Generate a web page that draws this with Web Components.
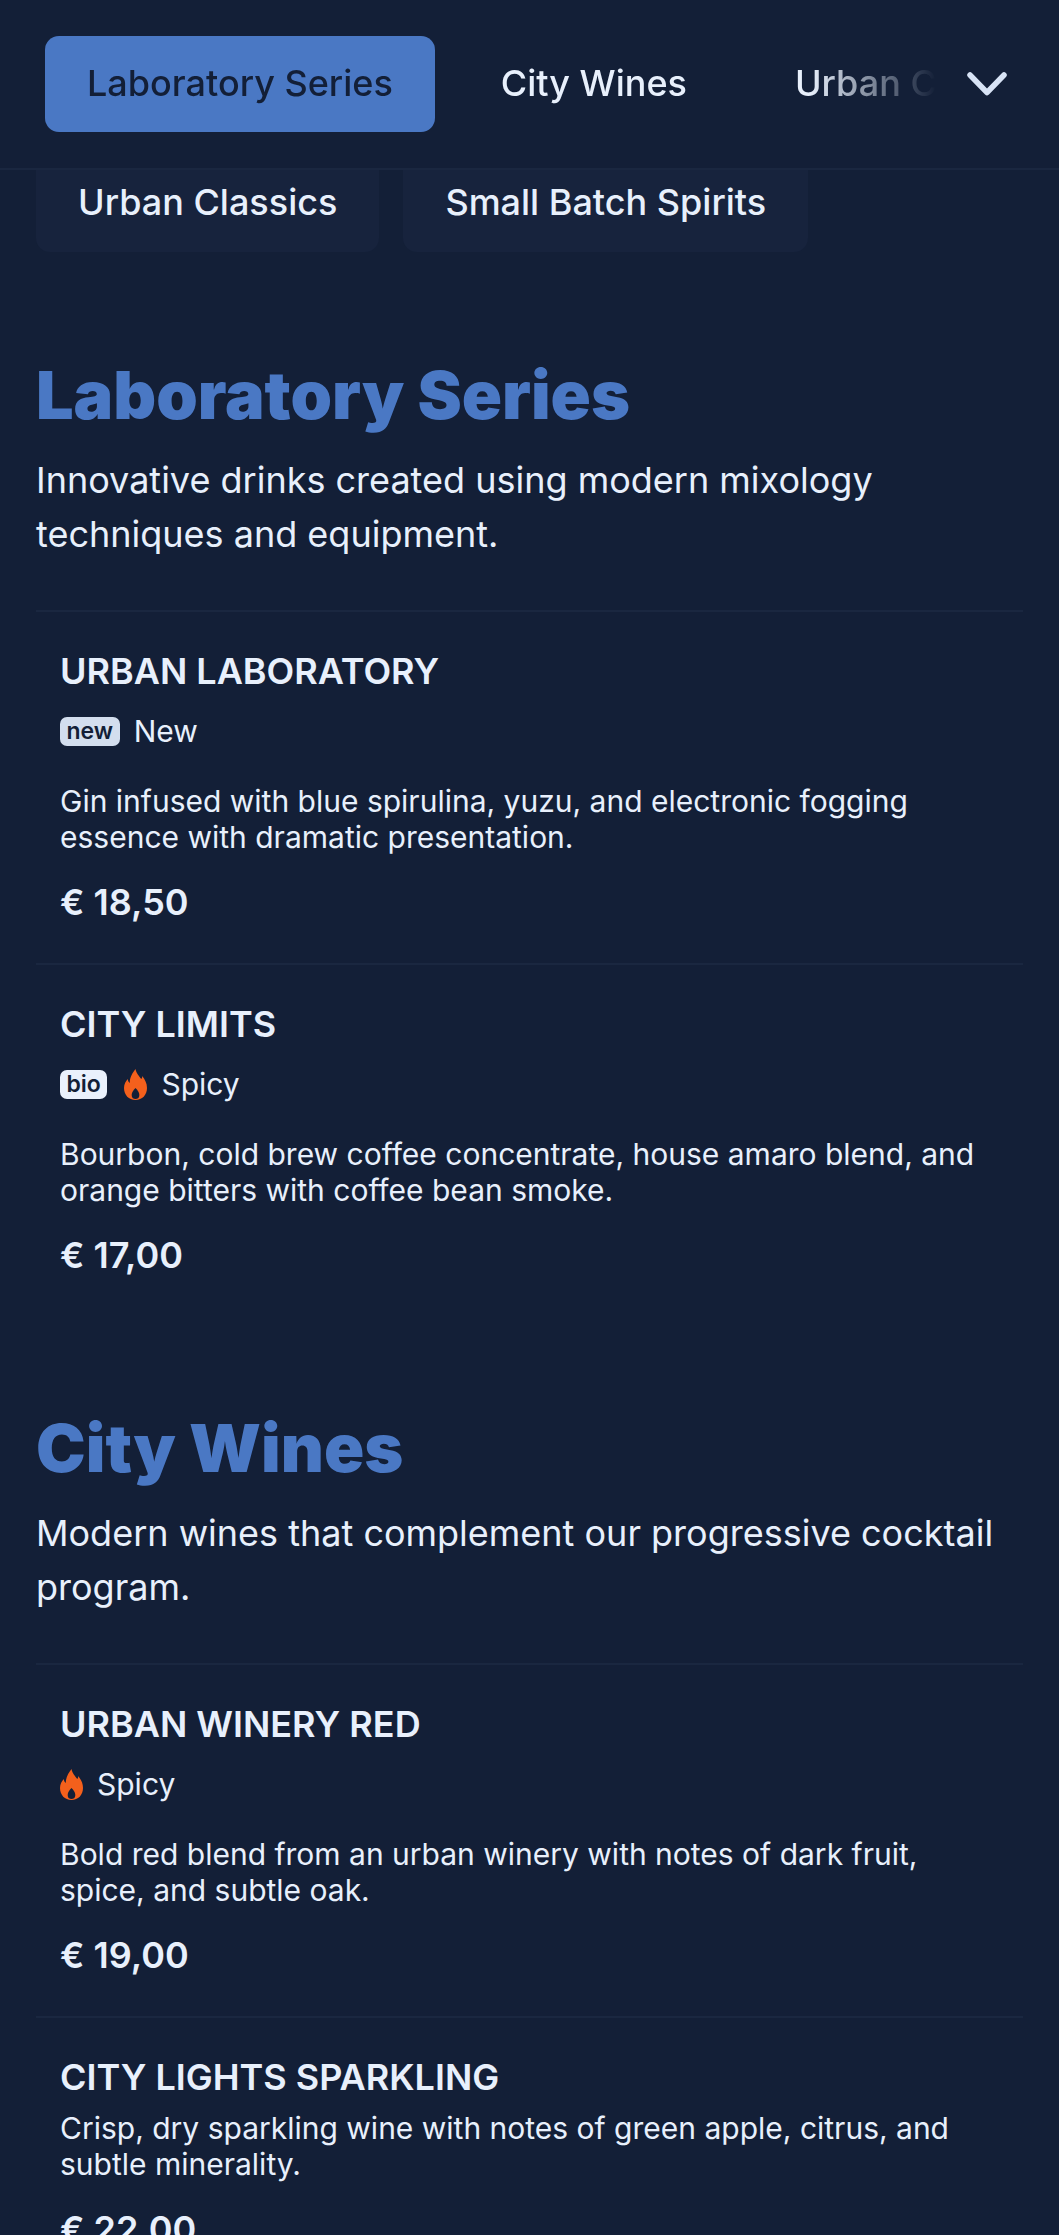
<!DOCTYPE html>
<html>
<head>
<meta charset="utf-8">
<style>
  html, body { margin: 0; height: 2235px; overflow: hidden; background: #131f37; }
  body { font-family: "Inter", "Liberation Sans", sans-serif; color: #e8f0fc; }
</style>
</head>
<body>
<menu-nav active="Laboratory Series"></menu-nav>
<chip-row></chip-row>
<menu-section title="Laboratory Series" intro="Innovative drinks created using modern mixology techniques and equipment.">
  <menu-item name="URBAN LABORATORY" price="€ 18,50" badge="new" label="New">Gin infused with blue spirulina, yuzu, and electronic fogging essence with dramatic presentation.</menu-item>
  <menu-item name="CITY LIMITS" price="€ 17,00" badge="bio" spicy label="Spicy">Bourbon, cold brew coffee concentrate, house amaro blend, and orange bitters with coffee bean smoke.</menu-item>
</menu-section>
<menu-section title="City Wines" intro="Modern wines that complement our progressive cocktail program.">
  <menu-item name="URBAN WINERY RED" price="€ 19,00" spicy label="Spicy">Bold red blend from an urban winery with notes of dark fruit, spice, and subtle oak.</menu-item>
  <menu-item name="CITY LIGHTS SPARKLING" price="€ 22,00">Crisp, dry sparkling wine with notes of green apple, citrus, and subtle minerality.</menu-item>
</menu-section>
<script>
class MenuNav extends HTMLElement {
  constructor() {
    super();
    this.attachShadow({ mode: 'open' });
  }
  connectedCallback() {
    this.shadowRoot.innerHTML = `
      <style>
        :host { display: block; height: 168px; border-bottom: 2px solid #1a2740; position: relative; }
        .tabs { display: flex; gap: 24px; padding: 36px 0 0 45px; overflow: hidden; white-space: nowrap; width: 940px; box-sizing: border-box;
          -webkit-mask-image: linear-gradient(to right, #000 810px, transparent 936px); mask-image: linear-gradient(to right, #000 810px, transparent 936px); }
        .tab { height: 96px; line-height: 94px; padding: 0 42px; border-radius: 14px; font-size: 36px; font-weight: 500; flex: none; color: #e8f0fc; }
        .tab.active { background: #4a78c4; color: #131f37; }
        svg { position: absolute; right: 52px; top: 72px; width: 40px; height: 24px; }
      </style>
      <div class="tabs">
        <div class="tab active">Laboratory Series</div>
        <div class="tab">City Wines</div>
        <div class="tab">Urban Classics</div>
      </div>
      <svg viewBox="0 0 40 24" fill="none" stroke="#d8e3f5" stroke-width="5.5" stroke-linecap="round" stroke-linejoin="round"><path d="M3 3 L20 20.5 L37 3"/></svg>
    `;
  }
}
customElements.define('menu-nav', MenuNav);

class ChipRow extends HTMLElement {
  constructor() {
    super();
    this.attachShadow({ mode: 'open' });
  }
  connectedCallback() {
    this.shadowRoot.innerHTML = `
      <style>
        :host { display: flex; gap: 24px; padding: 0 36px 11px; height: 82px; overflow: hidden; }
        .chip { height: 82px; line-height: 64px; padding: 0 42px; background: #17233d; border-radius: 0 0 14px 14px; font-size: 36px; font-weight: 500; color: #e8f0fc; }
      </style>
      <div class="chip">Urban Classics</div>
      <div class="chip">Small Batch Spirits</div>
    `;
  }
}
customElements.define('chip-row', ChipRow);

class MenuSection extends HTMLElement {
  constructor() {
    super();
    this.attachShadow({ mode: 'open' });
  }
  connectedCallback() {
    this.shadowRoot.innerHTML = `
      <style>
        :host { display: block; padding: 0 36px; margin-top: 87px; }
        h2 { margin: 0 0 13px; font-weight: 900; font-size: 66.5px; line-height: 90px; color: #4a78c4; }
        p { margin: 0; font-size: 36px; line-height: 54px; color: #e8f0fc; padding-bottom: 49px; border-bottom: 2px solid #1a2740; }
      </style>
      <h2>${this.getAttribute('title')}</h2>
      <p>${this.getAttribute('intro')}</p>
      <slot></slot>
    `;
  }
}
customElements.define('menu-section', MenuSection);

class MenuItem extends HTMLElement {
  constructor() {
    super();
    this.attachShadow({ mode: 'open' });
  }
  connectedCallback() {
    const badge = this.getAttribute('badge');
    const label = this.getAttribute('label');
    const flame = `<svg width="23" height="31" viewBox="0 0 24 31" preserveAspectRatio="none"><path fill="#f4601c" d="M12 0c1 5 4 7 6 10 1-1 1-2 1-3 3 4 5 7 5 12 0 7-5 12-12 12S0 26 0 19c0-4 2-7 4-9 0 2 1 3 2 4C6 8 9 4 12 0z"/><path fill="#131f37" d="M12 19c2 2 4 4 4 7 0 3-2 4-4 4s-4-1-4-4c0-3 2-5 4-7z"/></svg>`;
    const hasTags = badge || label;
    this.shadowRoot.innerHTML = `
      <style>
        :host { display: block; padding: 36px 24px 38px; border-bottom: 2px solid #1a2740; }
        :host(:last-child) { border-bottom: 0; }
        h3 { margin: 0 0 10px; font-size: 36px; font-weight: 600; line-height: 46px; color: #e8f0fc; }
        .tags { display: flex; align-items: center; gap: 14px; height: 34px; margin: 20px 0 35px; font-size: 30px; }
        .badge { background: #d3deee; color: #131f37; border-radius: 7px; font-weight: 600; font-size: 23px; line-height: 28px; height: 29px; padding: 0 6.5px; }
        .badge.bio { background: #eaf1fc; margin-right: 3px; }
        .desc { font-size: 30px; line-height: 36px; color: #e8f0fc; }
        .price { font-size: 36px; font-weight: 600; line-height: 46px; margin-top: 24px; }
      </style>
      <h3>${this.getAttribute('name')}</h3>
      ${hasTags ? `<div class="tags">${badge ? `<span class="badge ${badge}">${badge}</span>` : ''}${this.hasAttribute('spicy') ? flame : ''}${label ? `<span>${label}</span>` : ''}</div>` : ''}
      <div class="desc"><slot></slot></div>
      <div class="price">${this.getAttribute('price')}</div>
    `;
  }
}
customElements.define('menu-item', MenuItem);
</script>
</body>
</html>
